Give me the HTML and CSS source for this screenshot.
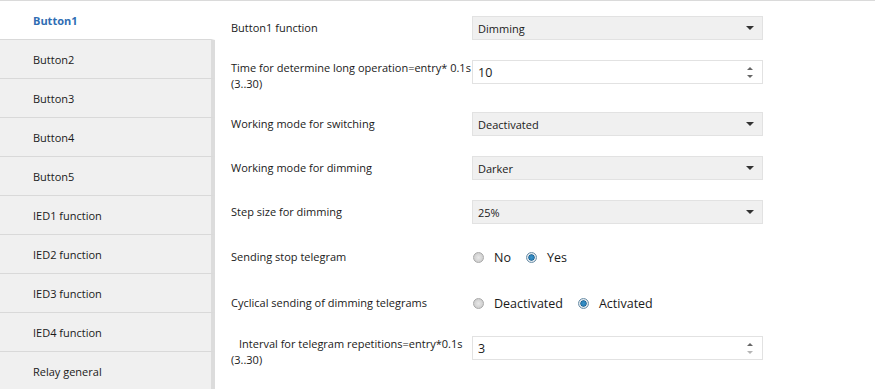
FILE: index.html
```html
<!DOCTYPE html>
<html lang="en">
<head>
    <meta charset="UTF-8">
    <title>Button1 parameters</title>
    <link rel="stylesheet" href="styles.css">
</head>
<body>
    <div class="app">
        <div class="nav">
            <div class="nav-item active">Button1</div>
            <div class="nav-item">Button2</div>
            <div class="nav-item">Button3</div>
            <div class="nav-item">Button4</div>
            <div class="nav-item">Button5</div>
            <div class="nav-item">IED1 function</div>
            <div class="nav-item">IED2 function</div>
            <div class="nav-item">IED3 function</div>
            <div class="nav-item">IED4 function</div>
            <div class="nav-item">Relay general</div>
        </div>

        <div class="content">
            <div class="row">
                <div class="label">Button1 function</div>
                <div class="select"><span>Dimming</span><i class="caret"></i></div>
            </div>
            <div class="row">
                <div class="label multi">Time for determine long operation=entry* 0.1s<br>(3..30)</div>
                <div class="spin"><span>10</span><i class="arrows"><b class="up"></b><b class="down"></b></i></div>
            </div>
            <div class="row">
                <div class="label">Working mode for switching</div>
                <div class="select"><span>Deactivated</span><i class="caret"></i></div>
            </div>
            <div class="row">
                <div class="label">Working mode for dimming</div>
                <div class="select"><span>Darker</span><i class="caret"></i></div>
            </div>
            <div class="row">
                <div class="label">Step size for dimming</div>
                <div class="select"><span>25%</span><i class="caret"></i></div>
            </div>
            <div class="row radio-row">
                <div class="label">Sending stop telegram</div>
                <div class="radios">
                    <label class="opt"><span class="radio"></span>No</label>
                    <label class="opt"><span class="radio on"></span>Yes</label>
                </div>
            </div>
            <div class="row radio-row">
                <div class="label">Cyclical sending of dimming telegrams</div>
                <div class="radios">
                    <label class="opt"><span class="radio"></span>Deactivated</label>
                    <label class="opt"><span class="radio on"></span>Activated</label>
                </div>
            </div>
            <div class="row">
                <div class="label multi"><span class="indent">Interval for telegram repetitions=entry*0.1s</span><br>(3..30)</div>
                <div class="spin"><span>3</span><i class="arrows"><b class="up"></b><b class="down dim"></b></i></div>
            </div>
        </div>
    </div>
</body>
</html>
```

FILE: styles.css
```css
body {
    margin: 0;
    font-family: "Open Sans", "Noto Sans", sans-serif;
    font-size: 11px;
    color: #1a1a1a;
    background: white;
    overflow: hidden;
}
.app {
    display: flex;
    height: 100vh;
    border-top: 1px solid #dadada;
}
.nav {
    width: 215px;
    flex-shrink: 0;
    background: #f0f0f0;
}
.nav-item {
    height: 38px;
    padding-left: 33px;
    display: flex;
    align-items: center;
    background: #f0f0f0;
    border-bottom: 1px solid #d9d9d9;
    border-right: 4px solid #dcdcdc;
}
.nav-item.active {
    background: white;
    color: #2f6db3;
    font-weight: 700;
    border-right-color: white;
}
.content {
    padding: 5px 0 0 16px;
}
.row {
    display: flex;
    align-items: flex-start;
    padding: 10px 0;
}
.radio-row {
    padding: 11px 0;
}
.label {
    width: 241px;
    flex-shrink: 0;
    line-height: 16px;
    padding-top: 4px;
    white-space: nowrap;
}
.label.multi {
    padding-top: 0;
}
.indent {
    padding-left: 8px;
}
.select, .spin {
    width: 284px;
    height: 22px;
    display: flex;
    align-items: center;
    justify-content: space-between;
    padding: 0 0 0 5px;
    border: 1px solid #e2e2e2;
}
.select {
    background: #f0f0f0;
}
.spin {
    background: white;
    font-size: 12.5px;
}
.caret {
    width: 0;
    height: 0;
    margin-right: 8px;
    border-left: 4px solid transparent;
    border-right: 4px solid transparent;
    border-top: 4px solid #333;
}
.arrows {
    display: flex;
    flex-direction: column;
    gap: 5px;
    margin-right: 9px;
}
.arrows b {
    width: 0;
    height: 0;
    border-left: 3px solid transparent;
    border-right: 3px solid transparent;
}
.arrows .up {
    border-bottom: 3px solid #666;
}
.arrows .down {
    border-top: 3px solid #666;
}
.arrows .down.dim {
    border-top-color: #b5b5b5;
}
.radios {
    display: flex;
    align-items: center;
    gap: 15px;
    height: 24px;
    font-size: 12.5px;
    padding-left: 1px;
}
.opt {
    display: flex;
    align-items: center;
    gap: 10px;
}
.radio {
    width: 9px;
    height: 9px;
    border-radius: 50%;
    border: 1px solid #a9a9a9;
    background: radial-gradient(circle at 50% 50%, #e8e8e8 0, #d3d3d3 60%, #c6c6c6 100%);
}
.radio.on {
    border-color: #6c8fa8;
    background: radial-gradient(circle at 50% 50%, #3a95c9 0, #2a7fb8 35%, #1d5f8c 45%, #e4ebf0 55%, #cdd8e0 100%);
}
```
